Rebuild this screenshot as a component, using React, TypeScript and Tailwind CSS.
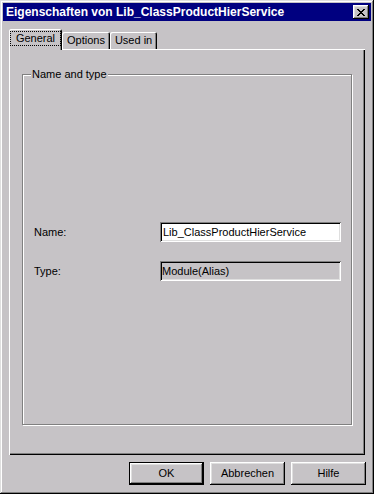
import React from "react";

const font = { fontFamily: '"Liberation Sans", Arial, sans-serif' };

const btn =
  "flex h-[23px] w-[75px] items-center justify-center text-[11px] text-black bg-[#c6c3c6] shadow-[inset_-1px_-1px_#000,inset_1px_1px_#fff,inset_-2px_-2px_#808080,inset_2px_2px_#dfdfdf]";

function Tab({ label, selected }: { label: string; selected?: boolean }) {
  if (selected) {
    return (
      <div className="relative z-10 -mb-px flex h-[21px] w-[53px] items-start justify-center rounded-t-[2px] bg-[#c6c3c6] pt-[2px] shadow-[inset_1px_1px_#fff,inset_-1px_0_#000,inset_-2px_0_#808080]">
        <span className="border border-dotted border-black px-[5px] leading-[13px]">{label}</span>
      </div>
    );
  }
  return (
    <div className="flex h-[17px] items-center justify-center rounded-t-[2px] px-[5px] shadow-[inset_1px_1px_#fff,inset_-1px_0_#000,inset_-2px_0_#808080]">
      {label}
    </div>
  );
}

export default function App() {
  return (
    <div
      style={font}
      className="flex h-[494px] w-[374px] flex-col bg-[#c6c3c6] p-[3px] text-[11px] text-black shadow-[inset_-1px_-1px_#000,inset_1px_1px_#dfdfdf,inset_-2px_-2px_#808080,inset_2px_2px_#fff]"
    >
      {/* title bar */}
      <div className="flex h-[18px] items-center justify-between bg-[#000080] pl-[3px] pr-[2px]">
        <span className="text-[12px] font-bold text-white">Eigenschaften von Lib_ClassProductHierService</span>
        <div className="flex h-[14px] w-[16px] items-center justify-center bg-[#c6c3c6] shadow-[inset_-1px_-1px_#000,inset_1px_1px_#fff,inset_-2px_-2px_#808080,inset_2px_2px_#dfdfdf]">
          <svg width="8" height="7" viewBox="0 0 8 7" shapeRendering="crispEdges">
            <path d="M0 0h2v1h-2zM6 0h2v1h-2zM1 1h2v1h-2zM5 1h2v1h-2zM2 2h4v1h-4zM3 3h2v1h-2zM2 4h4v1h-4zM1 5h2v1h-2zM5 5h2v1h-2zM0 6h2v1h-2zM6 6h2v1h-2z" fill="#000" />
          </svg>
        </div>
      </div>

      {/* tabs */}
      <div className="mt-[8px] flex items-end px-[6px]">
        <Tab label="General" selected />
        <Tab label="Options" />
        <Tab label="Used in" />
      </div>

      {/* tab panel */}
      <div className="mx-[6px] flex h-[406px] flex-col px-[13px] pb-[30px] pt-[25px] shadow-[inset_1px_1px_#fff,inset_-1px_-1px_#000,inset_-2px_-2px_#808080]">
        <div className="relative flex-1 border border-[#808080] shadow-[1px_1px_#fff,inset_1px_1px_#fff]">
          <span className="absolute -top-[8px] left-[8px] bg-[#c6c3c6] px-px leading-[14px]">Name and type</span>
          <div className="flex flex-col gap-[19px] pl-[11px] pr-[10px] pt-[147px]">
            <div className="flex h-[20px] items-center">
              <span className="w-[126px]">Name:</span>
              <div className="flex h-[20px] flex-1 items-center bg-white pl-[3px] shadow-[inset_1px_1px_#808080,inset_-1px_-1px_#fff,inset_2px_2px_#000,inset_-2px_-2px_#dfdfdf]">
                Lib_ClassProductHierService
              </div>
            </div>
            <div className="flex h-[20px] items-center">
              <span className="w-[126px]">Type:</span>
              <div className="flex h-[20px] flex-1 items-center pl-[2px] shadow-[inset_1px_1px_#808080,inset_-1px_-1px_#fff,inset_2px_2px_#000,inset_-2px_-2px_#dfdfdf]">
                Module(Alias)
              </div>
            </div>
          </div>
        </div>
      </div>

      {/* buttons */}
      <div className="mt-[7px] flex justify-end gap-[6px] pr-[5px]">
        <div className="h-[23px] w-[75px] border border-black">
          <div className="flex h-[21px] w-[73px] items-center justify-center shadow-[inset_-1px_-1px_#000,inset_1px_1px_#fff,inset_-2px_-2px_#808080,inset_2px_2px_#dfdfdf]">
            OK
          </div>
        </div>
        <div className={btn}>Abbrechen</div>
        <div className={btn}>Hilfe</div>
      </div>
    </div>
  );
}
